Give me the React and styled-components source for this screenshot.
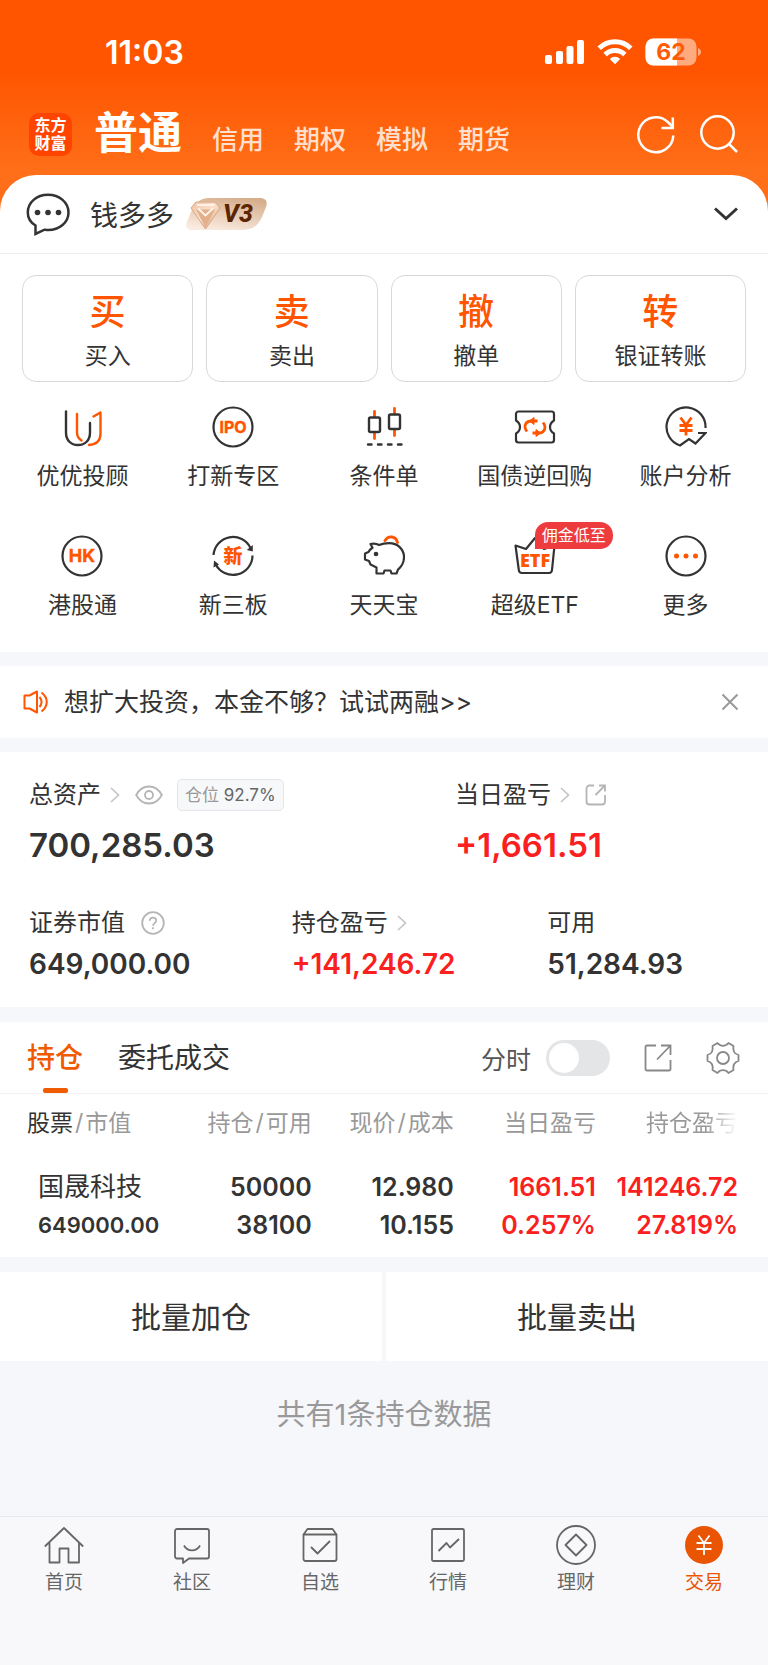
import React, {useState} from 'react';
import styled, {createGlobalStyle} from 'styled-components';

//--------------Data---------------
const accountTypes = ["信用", "期权", "模拟", "期货"];

const trades = [
    {mark: "买", label: "买入"},
    {mark: "卖", label: "卖出"},
    {mark: "撤", label: "撤单"},
    {mark: "转", label: "银证转账"},
];

const tools = [
    {label: "优优投顾", icon: <AdvisorIcon />},
    {label: "打新专区", icon: <RoundIcon text="IPO" size={16} />},
    {label: "条件单", icon: <CandleIcon />},
    {label: "国债逆回购", icon: <BondIcon />},
    {label: "账户分析", icon: <AnalysisIcon />},
    {label: "港股通", icon: <RoundIcon text="HK" size={18} />},
    {label: "新三板", icon: <NewBoardIcon />},
    {label: "天天宝", icon: <PiggyIcon />},
    {label: "超级ETF", icon: <EtfIcon />, badge: "佣金低至"},
    {label: "更多", icon: <MoreIcon />},
];

const holdings = [
    {
        name: "国晟科技",
        value: "649000.00",
        cells: [
            {top: "50000", bottom: "38100"},
            {top: "12.980", bottom: "10.155"},
            {top: "1661.51", bottom: "0.257%", up: true},
            {top: "141246.72", bottom: "27.819%", up: true},
        ],
    },
];

const menus = [
    {label: "首页", icon: <HomeIcon />},
    {label: "社区", icon: <CommunityIcon />},
    {label: "自选", icon: <WatchlistIcon />},
    {label: "行情", icon: <MarketIcon />},
    {label: "理财", icon: <WealthIcon />},
    {label: "交易", icon: <TradeIcon />, active: true},
];
//---------------------------------

function App() {
    const [tab, setTab] = useState("hold");
    const [minute, setMinute] = useState(false);
    const [notice, setNotice] = useState(true);

  return (
    <Page>
        <GlobalStyle />
        <Top>
            <StatusBar>
                <Time>11:03</Time>
                <StatusIcons>
                    <SignalIcon />
                    <WifiIcon />
                    <BatteryIcon />
                </StatusIcons>
            </StatusBar>
            <Header>
                <Logo>东方<br />财富</Logo>
                <AccountTabs>
                    <AccountTab $active>普通</AccountTab>
                    {accountTypes.map((item) => (
                        <AccountTab key={item}>{item}</AccountTab>
                    ))}
                </AccountTabs>
                <HeaderButtons>
                    <IconButton aria-label="刷新"><RefreshIcon /></IconButton>
                    <IconButton aria-label="搜索"><SearchIcon /></IconButton>
                </HeaderButtons>
            </Header>
            <Panel>
                <UserRow>
                    <ChatIcon />
                    <UserName>钱多多</UserName>
                    <LevelBadge />
                    <UserToggle aria-label="展开"><DownIcon /></UserToggle>
                </UserRow>
                <TradeGrid>
                    {trades.map((item) => (
                        <TradeCard key={item.label}>
                            <TradeMark>{item.mark}</TradeMark>
                            <TradeLabel>{item.label}</TradeLabel>
                        </TradeCard>
                    ))}
                </TradeGrid>
                <ToolGrid>
                    {tools.map((item) => (
                        <Tool key={item.label}>
                            <ToolIcon>
                                {item.icon}
                                {item.badge && <ToolBadge>{item.badge}</ToolBadge>}
                            </ToolIcon>
                            <ToolLabel>{item.label}</ToolLabel>
                        </Tool>
                    ))}
                </ToolGrid>
            </Panel>
        </Top>

        {notice && (
            <Notice>
                <SpeakerIcon />
                <NoticeLink href="#notice">想扩大投资，本金不够？试试两融&gt;&gt;</NoticeLink>
                <IconButton aria-label="关闭" onClick={() => setNotice(false)}><CloseIcon /></IconButton>
            </Notice>
        )}

        <Assets>
            <AssetRow $columns="60% 40%">
                <div>
                    <AssetLabel>
                        总资产 <RightIcon />
                        <EyeIcon />
                        <Position><em>仓位</em> 92.7%</Position>
                    </AssetLabel>
                    <Total>700,285.03</Total>
                </div>
                <div>
                    <AssetLabel>
                        当日盈亏 <RightIcon />
                        <SmallShareIcon />
                    </AssetLabel>
                    <Total $up>+1,661.51</Total>
                </div>
            </AssetRow>
            <AssetRow $columns="37% 36% 27%">
                <div>
                    <AssetLabel $wide>证券市值 <HelpIcon /></AssetLabel>
                    <Amount>649,000.00</Amount>
                </div>
                <div>
                    <AssetLabel>持仓盈亏 <RightIcon /></AssetLabel>
                    <Amount $up>+141,246.72</Amount>
                </div>
                <div>
                    <AssetLabel>可用</AssetLabel>
                    <Amount>51,284.93</Amount>
                </div>
            </AssetRow>
        </Assets>

        <Holdings>
            <HoldTabs>
                <HoldTab $active={tab === "hold"} onClick={() => setTab("hold")}>持仓</HoldTab>
                <HoldTab $active={tab === "order"} onClick={() => setTab("order")}>委托成交</HoldTab>
                <HoldTools>
                    <MinuteLabel>
                        分时
                        <Switch type="checkbox" checked={minute} onChange={() => setMinute(!minute)} />
                    </MinuteLabel>
                    <IconButton aria-label="分享"><ShareIcon /></IconButton>
                    <IconButton aria-label="设置"><GearIcon /></IconButton>
                </HoldTools>
            </HoldTabs>
            <Table>
                <thead>
                    <tr>
                        <th><b>股票</b><Slash>/</Slash>市值</th>
                        <th>持仓<Slash>/</Slash>可用</th>
                        <th>现价<Slash>/</Slash>成本</th>
                        <th>当日盈亏</th>
                        <th><Fade>持仓盈亏</Fade></th>
                    </tr>
                </thead>
                <tbody>
                    {holdings.map((row) => (
                        <tr key={row.name}>
                            <td>
                                <StockName>{row.name}</StockName>
                                <StockValue>{row.value}</StockValue>
                            </td>
                            {row.cells.map((cell) => (
                                <Cell key={cell.top} $up={cell.up}>
                                    {cell.top}<br />{cell.bottom}
                                </Cell>
                            ))}
                        </tr>
                    ))}
                </tbody>
            </Table>
        </Holdings>

        <BatchRow>
            <BatchButton>批量加仓</BatchButton>
            <BatchButton>批量卖出</BatchButton>
        </BatchRow>
        <Count>共有1条持仓数据</Count>

        <Menu>
            {menus.map((item) => (
                <MenuItem key={item.label} href="#menu" $active={item.active}>
                    {item.icon}
                    {item.label}
                </MenuItem>
            ))}
        </Menu>
    </Page>
  )
}

export default App;

//----------------Icons-----------------
function SignalIcon() {
    return (
        <svg width="40" height="28" viewBox="0 0 40 28" fill="#fff">
            <rect x="0" y="17" width="7" height="9" rx="2" />
            <rect x="11" y="13" width="7" height="13" rx="2" />
            <rect x="21.5" y="8" width="7" height="18" rx="2" />
            <rect x="32" y="2" width="7" height="24" rx="2" />
        </svg>
    );
}

function WifiIcon() {
    return (
        <svg width="36" height="28" viewBox="0 0 36 28" fill="none" stroke="#fff" strokeWidth="5">
            <path d="M2.2 10.2a22.5 22.5 0 0 1 31.6 0" />
            <path d="M8.2 16.6a14 14 0 0 1 19.6 0" />
            <path d="M18 26.2l-5.2-5.3a7.5 7.5 0 0 1 10.4 0z" fill="#fff" stroke="none" />
        </svg>
    );
}

function BatteryIcon() {
    return (
        <svg width="57" height="28" viewBox="0 0 57 28">
            <rect x="0.5" y="0.5" width="51" height="27" rx="8" fill="#ffab80" />
            <path d="M8.5 0.5H32V27.5H8.5a8 8 0 0 1-8-8v-11a8 8 0 0 1 8-8z" fill="#fff" />
            <path d="M53 10c4 1.500 4 6.500 0 8z" fill="#ffab80" />
            <text x="26" y="22" textAnchor="middle" fontSize="23" fontWeight="700" fill="#ff5a05">62</text>
        </svg>
    );
}

function RefreshIcon() {
    return (
        <svg width="38" height="40" viewBox="0 0 38 40" fill="none" stroke="#fff" strokeWidth="2.5">
            <path d="M36.3 21.5a17.500 17.500 0 1 1-5.500-13.500l5 5" />
            <path d="M35.8 3.5v10.500H24.5" />
        </svg>
    );
}

function SearchIcon() {
    return (
        <svg width="38" height="40" viewBox="0 0 38 40" fill="none" stroke="#fff" strokeWidth="2.5">
            <circle cx="17.5" cy="18.5" r="16.2" />
            <path d="M28.5 29.5l8.500 8.500" />
        </svg>
    );
}

function ChatIcon() {
    return (
        <svg width="44" height="44" viewBox="0 0 44 44" fill="none" stroke="#333" strokeWidth="2.5">
            <path d="M9.5 42v-8.500C4.5 30.500 1.8 26 1.8 20.500 1.8 10.500 10.5 2.8 22 2.8S42.500 10.5 42.500 20.500 33.500 38 22 38c-1.500 0-2.500-.2-3.500-.3z" />
            <g fill="#333" stroke="none">
                <circle cx="11.5" cy="20.5" r="2.800" />
                <circle cx="22" cy="20.5" r="2.800" />
                <circle cx="32.5" cy="20.5" r="2.800" />
            </g>
        </svg>
    );
}

function LevelBadge() {
    return (
        <svg width="82" height="34" viewBox="0 0 82 34">
            <defs>
                <linearGradient id="level" x1="0.7" y1="0" x2="0.3" y2="1">
                    <stop offset="0" stopColor="#d6ae8c" />
                    <stop offset="1" stopColor="#faebe0" />
                </linearGradient>
                <linearGradient id="gem" x1="0" y1="0" x2="1" y2="1">
                    <stop offset="0" stopColor="#f0c4a4" />
                    <stop offset="0.5" stopColor="#fbdfcb" />
                    <stop offset="1" stopColor="#cb946d" />
                </linearGradient>
            </defs>
            <path d="M23 1h51c6 0 8 4 6 9l-4 10c-4 9-10 13-19 13H6c-5 0-7-3-5-8l4-10C9 6 14 1 23 1z" fill="url(#level)" />
            <path d="M10 5h19l5 6-14.500 21L5 11z" fill="url(#gem)" stroke="#dba983" />
            <path d="M10 12.500l9.500 18 9.500-18" fill="#e3b08c" stroke="none" />
            <path d="M11 8h17M12 11.500l7.500 7 7.500-7" fill="none" stroke="#fff3ea" strokeWidth="2" />
            <text x="52" y="25" textAnchor="middle" fontSize="25" fontWeight="800" fontStyle="italic" fontFamily="Roboto" fill="#5c2500">V3</text>
        </svg>
    );
}

function DownIcon() {
    return (
        <svg width="24" height="16" viewBox="0 0 24 16" fill="none" stroke="#333" strokeWidth="3">
            <path d="M1 2.5l11 10 11-10" />
        </svg>
    );
}

function AdvisorIcon() {
    return (
        <svg width="42" height="42" viewBox="0 0 42 42" fill="none" stroke="#333" strokeWidth="2.4" strokeLinecap="round" strokeLinejoin="round">
            <path d="M5 5.500v21c0 8 5 12.500 12 12.500s12-4.500 12-12.500V17" />
            <g stroke="#ff5500">
                <path d="M16 8v18.500c0 4 1.500 6 4.500 8" />
                <path d="M32.500 10.500l7-4V27.500c0 7-4 11-11.500 11.500" />
            </g>
        </svg>
    );
}

function RoundIcon({text, size}) {
    return (
        <svg width="42" height="42" viewBox="0 0 42 42">
            <circle cx="21" cy="21" r="19.5" fill="none" stroke="#333" strokeWidth="2.2" />
            <text x="21" y={21 + size * 0.36} textAnchor="middle" fontSize={size} fontWeight="700" fill="#ff5500" stroke="#ff5500" strokeWidth="0.4" strokeLinejoin="round">{text}</text>
        </svg>
    );
}

function CandleIcon() {
    return (
        <svg width="42" height="42" viewBox="0 0 42 42" fill="none" strokeWidth="2.4" strokeLinecap="round">
            <g stroke="#ff5500" strokeWidth="2.8">
                <path d="M11.5 5.500v5M11.5 27.500v5M31.500 2.500v5M31.500 24.500v5" />
            </g>
            <g stroke="#333">
                <rect x="6" y="11.5" width="11" height="14.500" rx="1.5" />
                <rect x="26" y="8.5" width="11" height="14.500" rx="1.5" />
                <path d="M5 38.500h3.500M15 38.500h3.500M25 38.500h3.500M35 38.500h3.500" />
            </g>
        </svg>
    );
}

function BondIcon() {
    return (
        <svg width="42" height="42" viewBox="0 0 42 42" fill="none" stroke="#333" strokeWidth="2.2" strokeLinejoin="round">
            <path d="M4.5 5.500h33a2.500 2.500 0 0 1 2.500 2.500v6.500c-2.500 1.500-4 3.500-4 6.500s1.500 5 4 6.500V34a2.500 2.500 0 0 1-2.500 2.500h-33A2.500 2.500 0 0 1 2 34v-6.500c2.500-1.500 4-3.500 4-6.500s-1.500-5-4-6.500V8a2.500 2.500 0 0 1 2.500-2.500z" />
            <g stroke="#ff5500" strokeWidth="2.8">
                <path d="M13 25.500c-4-5-1.500-10.500 4.500-10.500h6M29 16.500c4 5 1.500 10.500-4.500 10.500h-6" />
                <path d="M20 11.500l-4.500 3.500 4.500 3.500zM22 23.500l4.500 3.500-4.500 3.500z" fill="#ff5500" strokeWidth="1" />
            </g>
        </svg>
    );
}

function AnalysisIcon() {
    return (
        <svg width="42" height="42" viewBox="0 0 42 42" fill="none" stroke="#333" strokeWidth="2.2">
            <path d="M40.5 22A19.500 19.500 0 1 0 15 39.500L24 33l6.500 4.500L40.5 27H33" />
            <path d="M15.5 11.500l5.500 7.500 5.500-7.500M21 19v10.500M14.5 19.500h13M14.5 24.500h13" stroke="#ff5500" strokeWidth="2.8" />
        </svg>
    );
}

function NewBoardIcon() {
    return (
        <svg width="42" height="42" viewBox="0 0 42 42">
            <path d="M1.5 20A19.500 19.500 0 0 1 38.5 13M40.5 20.500A19.500 19.500 0 0 1 3.5 29" fill="none" stroke="#333" strokeWidth="2.2" />
            <path d="M40.8 10v6.500l-6-1.500zM1.5 32.500l.5-7 5 4z" fill="#333" />
            <text x="21" y="28" textAnchor="middle" fontSize="19" fontWeight="900" fill="#ff5500">新</text>
        </svg>
    );
}

function PiggyIcon() {
    return (
        <svg width="42" height="42" viewBox="0 0 42 42" fill="none" stroke="#333" strokeWidth="2.2" strokeLinejoin="round">
            <path d="M22 5.500c3.500-5.500 11-4.500 12.500 2" stroke="#ff5500" strokeWidth="2.8" strokeLinecap="round" />
            <path d="M7.5 9c3-.8 6-.5 8.500 1 3-1.200 6-1.800 10-1.800 8.500 0 15 5.800 15 14 0 5-2 9-6 12.500L33.500 38.500h-5l-1-3h-6l-1 3h-7v-6L7.5 29.500 6 26l-4-1.500v-6l3.500-1.500c1-2 2-3 4-4.200z" />
            <circle cx="13" cy="19" r="2.300" fill="#333" stroke="none" />
        </svg>
    );
}

function EtfIcon() {
    return (
        <svg width="42" height="42" viewBox="0 0 42 42">
            <path d="M1.5 10.500L12 14l9-11 9 11 10.500-3.500L38 35c-.2 2-1.200 3-3 3H8c-2 0-3-1-3.200-3z" fill="none" stroke="#333" strokeWidth="2.2" strokeLinejoin="round" />
            <text x="21" y="32" textAnchor="middle" fontSize="18" fontWeight="800" fontFamily="Open Sans" fill="#ff5500">ETF</text>
        </svg>
    );
}

function MoreIcon() {
    return (
        <svg width="42" height="42" viewBox="0 0 42 42">
            <circle cx="21" cy="21" r="19.5" fill="none" stroke="#333" strokeWidth="2.2" />
            <g fill="#ff5500">
                <circle cx="11.5" cy="21" r="2.500" />
                <circle cx="21" cy="21" r="2.500" />
                <circle cx="30.5" cy="21" r="2.500" />
            </g>
        </svg>
    );
}

function SpeakerIcon() {
    return (
        <svg width="26" height="24" viewBox="0 0 26 24" fill="none" stroke="#ff5500" strokeWidth="2">
            <path d="M1.5 5.500h5l7.500-4v21l-7.500-4h-5z" strokeLinejoin="round" />
            <path d="M16.5 7c2.500 3 2.500 7 0 10M18.500 2.500c7 5.500 7 13.500 0 19" />
        </svg>
    );
}

function CloseIcon() {
    return (
        <svg width="18" height="18" viewBox="0 0 18 18" stroke="#999" strokeWidth="2">
            <path d="M1.5 1.500l15 15M16.5 1.500l-15 15" />
        </svg>
    );
}

function RightIcon() {
    return (
        <svg width="12" height="16" viewBox="0 0 12 16" fill="none" stroke="#c4c4c4" strokeWidth="1.6">
            <path d="M2 1l7.500 7-7.500 7" />
        </svg>
    );
}

function EyeIcon() {
    return (
        <svg width="28" height="20" viewBox="0 0 28 20" fill="none" stroke="#b5b5b5" strokeWidth="1.8">
            <path d="M1.2 10C4 4.800 8.500 1.500 14 1.500S24 4.800 26.800 10C24 15.200 19.500 18.500 14 18.500S4 15.200 1.200 10z" />
            <circle cx="14" cy="10" r="4" />
        </svg>
    );
}

function SmallShareIcon() {
    return (
        <svg width="22" height="22" viewBox="0 0 22 22" fill="none" stroke="#b5b5b5" strokeWidth="1.8">
            <path d="M9 1.500H4.500a3 3 0 0 0-3 3v13a3 3 0 0 0 3 3h12.500a3 3 0 0 0 3-3V11M14 1.500h6v6M20 1.500l-9.500 9.500" />
        </svg>
    );
}

function HelpIcon() {
    return (
        <svg width="24" height="24" viewBox="0 0 24 24" fill="none" stroke="#b5b5b5" strokeWidth="1.8">
            <circle cx="12" cy="12" r="10.8" />
            <path d="M8.8 9.800c0-4.300 6.400-4.300 6.400-.3 0 2.500-3.200 2.700-3.200 5.200M12 16.200v2" />
        </svg>
    );
}

function ShareIcon() {
    return (
        <svg width="28" height="28" viewBox="0 0 28 28" fill="none" stroke="#888" strokeWidth="1.8">
            <path d="M12 1.500H3a1.500 1.500 0 0 0-1.500 1.500v22A1.500 1.500 0 0 0 3 26.500h22a1.500 1.500 0 0 0 1.500-1.500v-9M17 1.500h9.500v9.500M26.500 1.500L13 15.500" />
        </svg>
    );
}

function GearIcon() {
    return (
        <svg width="34" height="34" viewBox="0 0 34 34" fill="none" stroke="#888" strokeWidth="1.8" strokeLinejoin="round">
            <path d="M11.5 2c1.500 2 3.300 2.800 5.500 2.800S21 4 22.500 2l5 3c-.8 4.500 1 8 5 9v6c-4 1-5.800 4-5 9l-5 3c-1.500-2-3.300-2.800-5.500-2.800S13 30 11.500 32l-5-3c.8-5-1-8-5-9v-6c4-1 5.800-4.500 5-9z" />
            <circle cx="17" cy="17" r="6" />
        </svg>
    );
}

function HomeIcon() {
    return (
        <svg width="40" height="40" viewBox="0 0 40 40" fill="none" stroke="#666" strokeWidth="1.8" strokeLinejoin="round">
            <path d="M.8 21.500L20 3l19.200 18.500M5.500 17.500V37.500h10V23.500h9v14h10.500v-20" />
        </svg>
    );
}

function CommunityIcon() {
    return (
        <svg width="40" height="40" viewBox="0 0 40 40" fill="none" stroke="#666" strokeWidth="1.8" strokeLinejoin="round">
            <path d="M5 4h30a2 2 0 0 1 2 2v25.500a2 2 0 0 1-2 2H17L11 38v-4.500H5a2 2 0 0 1-2-2V6a2 2 0 0 1 2-2z" />
            <path d="M12 20.500c3.500 6.500 12.500 6.500 16 0" />
        </svg>
    );
}

function WatchlistIcon() {
    return (
        <svg width="40" height="40" viewBox="0 0 40 40" fill="none" stroke="#666" strokeWidth="1.8" strokeLinejoin="round">
            <path d="M3.5 9.500L7.500 4h25l4 5.500V34a2 2 0 0 1-2 2h-29a2 2 0 0 1-2-2zM3.5 9.500h33" />
            <path d="M11 22l6.500 6.500 12.500-12.500" />
        </svg>
    );
}

function MarketIcon() {
    return (
        <svg width="40" height="40" viewBox="0 0 40 40" fill="none" stroke="#666" strokeWidth="1.8" strokeLinejoin="round">
            <rect x="4" y="4" width="32" height="32" rx="1.5" />
            <path d="M10.5 26l8-8 3.500 4.500 9-8.500" />
        </svg>
    );
}

function WealthIcon() {
    return (
        <svg width="40" height="40" viewBox="0 0 40 40" fill="none" stroke="#666" strokeWidth="1.8" strokeLinejoin="round">
            <circle cx="20" cy="20" r="19" />
            <path d="M20 9.500L30.500 20 20 30.500 9.500 20z" />
        </svg>
    );
}

function TradeIcon() {
    return (
        <svg width="40" height="40" viewBox="0 0 40 40" fill="none" stroke="#fff" strokeWidth="1.8">
            <circle cx="20" cy="20" r="19" fill="#ea5504" stroke="none" />
            <path d="M14.5 10.500l5.500 7.500 5.500-7.500M20 18v12M12.500 18h15M12.500 24h15" />
        </svg>
    );
}
//--------------------------------------

const GlobalStyle = createGlobalStyle`
    * {
        box-sizing: border-box;
    }
    body {
        margin: 0;
        background: #f6f7fa;
        color: #333;
        font-family: Inter, "Noto Sans CJK SC", sans-serif;
    }
    button {
        font: inherit;
        color: inherit;
        background: none;
        border: 0;
        padding: 0;
        cursor: pointer;
    }
    a {
        color: inherit;
        text-decoration: none;
    }
    svg {
        display: block;
        flex-shrink: 0;
    }
`;
const Page = styled.div`
    min-height: 100vh;
    display: flex;
    flex-direction: column;
`;
const Top = styled.div`
    background: linear-gradient(#ff5500 70px, #ff6e18 170px);
`;
const StatusBar = styled.div`
    height: 104px;
    padding: 0 66px 0 105px;
    display: flex;
    justify-content: space-between;
    align-items: center;
`;
const Time = styled.div`
    color: #fff;
    font-size: 32px;
    font-weight: 600;
`;
const StatusIcons = styled.div`
    display: flex;
    align-items: center;
    gap: 12px;
`;
const Header = styled.div`
    height: 71px;
    padding: 0 30px 11px 29px;
    display: flex;
    align-items: center;
`;
const Logo = styled.div`
    width: 43px;
    height: 43px;
    border-radius: 10px;
    background: #ff4400;
    color: #fff;
    display: flex;
    align-items: center;
    justify-content: center;
    font-size: 16px;
    line-height: 18px;
    font-weight: 700;
`;
const AccountTabs = styled.nav`
    margin-left: 22px;
    padding-top: 5px;
    flex: 1;
    display: flex;
    align-items: baseline;
    gap: 30px;
`;
const AccountTab = styled.button`
    color: ${(props) => (props.$active ? "#fff" : "#ffe0cf")};
    font-size: ${(props) => (props.$active ? "44px" : "26px")};
    font-weight: ${(props) => (props.$active ? 700 : 500)};
    line-height: 50px;
`;
const HeaderButtons = styled.div`
    display: flex;
    gap: 25px;
`;
const IconButton = styled.button`
    display: flex;
`;
const Panel = styled.main`
    background: #fff;
    border-radius: 36px 36px 0 0;
    padding-bottom: 32px;
`;
const UserRow = styled.div`
    height: 79px;
    padding: 0 30px 0 26px;
    border-bottom: 1px solid #ececec;
    display: flex;
    align-items: center;
`;
const UserName = styled.div`
    margin: 0 12px 0 20px;
    padding-top: 3px;
    font-size: 28px;
    line-height: 40px;
`;
const UserToggle = styled(IconButton)`
    margin-left: auto;
`;
const TradeGrid = styled.div`
    padding: 21px 22px 24px;
    display: grid;
    grid-template-columns: repeat(4, 1fr);
    gap: 13px;
`;
const TradeCard = styled.button`
    border: 1px solid #d8d8d8;
    border-radius: 14px;
    padding: 15px 0 10px;
    display: flex;
    flex-direction: column;
    align-items: center;
    gap: 9px;
`;
const TradeMark = styled.span`
    color: #ff5500;
    font-size: 36px;
    line-height: 42px;
    font-weight: 500;
`;
const TradeLabel = styled.span`
    font-size: 23px;
    line-height: 29px;
`;
const ToolGrid = styled.div`
    padding: 0 7px;
    display: grid;
    grid-template-columns: repeat(5, 1fr);
    row-gap: 44px;
`;
const Tool = styled.button`
    display: flex;
    flex-direction: column;
    align-items: center;
    gap: 13px;
`;
const ToolIcon = styled.span`
    position: relative;
`;
const ToolBadge = styled.span`
    position: absolute;
    left: 21px;
    top: -13px;
    padding: 0 7px;
    border-radius: 13px 13px 13px 0;
    background: #ee3c3e;
    color: #fff;
    font-size: 16px;
    line-height: 27px;
    white-space: nowrap;
`;
const ToolLabel = styled.span`
    font-size: 23px;
    line-height: 30px;
`;
const Notice = styled.div`
    margin-top: 14px;
    height: 72px;
    padding: 0 29px 0 23px;
    background: #fff;
    display: flex;
    align-items: center;
`;
const NoticeLink = styled.a`
    flex: 1;
    margin-left: 15px;
    font-size: 25px;
    line-height: 32px;
`;
const Assets = styled.section`
    margin-top: 14px;
    padding: 27px 29px;
    background: #fff;
    display: grid;
    gap: 42px;
`;
const AssetRow = styled.div`
    display: grid;
    grid-template-columns: ${(props) => props.$columns};
`;
const AssetLabel = styled.div`
    display: flex;
    align-items: center;
    font-size: 24px;
    line-height: 32px;
    svg {
        margin-left: ${(props) => (props.$wide ? "16px" : "8px")};
    }
    svg + svg {
        margin-left: 14px;
    }
`;
const Position = styled.span`
    margin-left: 14px;
    padding: 0 7px;
    border: 1px solid #e4e5e9;
    border-radius: 5px;
    background: #f7f8fa;
    color: #666;
    font-size: 17px;
    line-height: 30px;
    em {
        color: #999;
        font-style: normal;
    }
`;
const Total = styled.div`
    margin-top: 14px;
    color: ${(props) => (props.$up ? "#fa2020" : "#333")};
    font-size: 33px;
    line-height: 40px;
    font-weight: 600;
`;
const Amount = styled.div`
    margin-top: 9px;
    color: ${(props) => (props.$up ? "#fa2020" : "#333")};
    font-size: 28px;
    line-height: 32px;
    font-weight: 600;
`;
const Holdings = styled.section`
    margin-top: 15px;
    background: #fff;
`;
const HoldTabs = styled.div`
    height: 72px;
    padding: 0 28px 0 27px;
    border-bottom: 1px solid #f2f3f5;
    display: flex;
    gap: 35px;
`;
const HoldTab = styled.button`
    position: relative;
    padding-bottom: 3px;
    font-size: 28px;
    color: ${(props) => (props.$active ? "#f05a00" : "#333")};
    font-weight: ${(props) => (props.$active ? 500 : 400)};
    &::after {
        content: "";
        display: ${(props) => (props.$active ? "block" : "none")};
        position: absolute;
        left: calc(50% - 12px);
        bottom: 0;
        width: 25px;
        height: 5px;
        border-radius: 2px;
        background: #f05a00;
    }
`;
const HoldTools = styled.div`
    margin-left: auto;
    display: flex;
    align-items: center;
    gap: 34px;
`;
const MinuteLabel = styled.label`
    display: flex;
    align-items: center;
    gap: 15px;
    color: #555;
    font-size: 25px;
`;
const Switch = styled.input`
    appearance: none;
    margin: 0;
    width: 64px;
    height: 36px;
    padding: 3px;
    border-radius: 18px;
    background: ${(props) => (props.checked ? "#f05a00" : "#e4e5e7")};
    cursor: pointer;
    &::before {
        content: "";
        display: block;
        width: 30px;
        height: 30px;
        border-radius: 50%;
        background: #fff;
        margin-left: ${(props) => (props.checked ? "28px" : "0")};
    }
`;
const Table = styled.table`
    width: 100%;
    padding-right: 30px;
    border-spacing: 0;
    table-layout: fixed;
    th {
        padding: 0 0 3px;
        height: 56px;
        color: #999;
        font-size: 23px;
        font-weight: 400;
        text-align: right;
        white-space: nowrap;
    }
    th:first-child {
        width: 23%;
        padding-left: 27px;
        text-align: left;
    }
    th b {
        color: #333;
        font-weight: 400;
    }
    td {
        padding: 18px 0 13px;
        line-height: 38px;
        white-space: nowrap;
    }
    td:first-child {
        padding-left: 38px;
    }
`;
const Slash = styled.span`
    padding: 0 2px;
`;
const Fade = styled.span`
    mask-image: linear-gradient(to right, #000 65%, transparent);
`;
const StockName = styled.div`
    font-size: 26px;
`;
const StockValue = styled.div`
    font-size: 22px;
    font-weight: 600;
`;
const Cell = styled.td`
    color: ${(props) => (props.$up ? "#fa2020" : "#333")};
    font-size: 25px;
    font-weight: 600;
    text-align: right;
`;
const BatchRow = styled.div`
    margin-top: 15px;
    display: grid;
    grid-template-columns: 1fr 1fr;
    gap: 4px;
`;
const BatchButton = styled.button`
    height: 89px;
    padding-bottom: 3px;
    background: #fff;
    font-size: 30px;
`;
const Count = styled.p`
    margin: 34px 0;
    color: #999;
    font-size: 29px;
    line-height: 40px;
    text-align: center;
`;
const Menu = styled.nav`
    margin-top: auto;
    padding: 8px 0 70px;
    border-top: 1px solid #e8e9eb;
    background: #f8f8fb;
    display: grid;
    grid-template-columns: repeat(6, 1fr);
`;
const MenuItem = styled.a`
    display: flex;
    flex-direction: column;
    align-items: center;
    gap: 6px;
    color: ${(props) => (props.$active ? "#ea5504" : "#666")};
    font-size: 19px;
    line-height: 24px;
`;
